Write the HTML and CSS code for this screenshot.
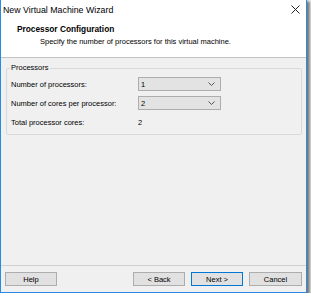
FILE: index.html
```html
<!DOCTYPE html>
<html>
<head>
<meta charset="utf-8">
<link rel="stylesheet" href="styles.css">
</head>
<body>
<div class="window">
  <div class="titlebar">
    <span class="title">New Virtual Machine Wizard</span>
    <svg class="close" width="9" height="9" viewBox="0 0 9 9"><path d="M0.5 0.5 L8.5 8.5 M8.5 0.5 L0.5 8.5" stroke="#222" stroke-width="1" fill="none"/></svg>
  </div>
  <div class="header">
    <div class="heading">Processor Configuration</div>
    <div class="subtitle">Specify the number of processors for this virtual machine.</div>
  </div>
  <div class="content">
    <fieldset class="group">
      <legend>Processors</legend>
      <div class="grid">
        <div class="label">Number of processors:</div>
        <div class="combo"><span>1</span><svg width="7" height="4" viewBox="0 0 7 4"><path d="M0.5 0.5 L3.5 3.5 L6.5 0.5" stroke="#555" fill="none"/></svg></div>
        <div class="label">Number of cores per processor:</div>
        <div class="combo"><span>2</span><svg width="7" height="4" viewBox="0 0 7 4"><path d="M0.5 0.5 L3.5 3.5 L6.5 0.5" stroke="#555" fill="none"/></svg></div>
        <div class="label">Total processor cores:</div>
        <div class="value">2</div>
      </div>
    </fieldset>
  </div>
  <div class="footer">
    <button class="btn">Help</button>
    <div class="spacer"></div>
    <button class="btn">&lt; Back</button>
    <button class="btn primary">Next &gt;</button>
    <button class="btn cancel">Cancel</button>
  </div>
</div>
</body>
</html>
```

FILE: styles.css
```css
html, body {
  margin: 0;
  padding: 0;
  background: #ffffff;
}
body {
  font-family: "Liberation Sans", Arial, sans-serif;
  font-size: 7.5px;
  color: #000;
}
.window {
  width: 305px;
  height: 292px;
  border-left: 1px solid #2a8ae2;
  border-right: 1px solid #2a8ae2;
  border-bottom: 1px solid #2a8ae2;
  background: #f0f0f0;
  display: flex;
  flex-direction: column;
  box-shadow: 2px 2px 3px 1px rgba(0,0,0,0.55);
}
.titlebar {
  height: 20px;
  background: #fff;
  display: flex;
  align-items: center;
  padding-left: 2px;
  padding-right: 6px;
}
.title {
  flex: 1;
  font-size: 8.8px;
}
.close {
  display: block;
  margin-top: -1px;
}
.header {
  background: #fff;
  padding: 4px 0 10px 16px;
  border-bottom: 1px solid #c3c3c3;
}
.heading {
  font-weight: bold;
  font-size: 8.3px;
  line-height: 10px;
}
.subtitle {
  line-height: 10px;
  margin-top: 3px;
  padding-left: 23px;
}
.content {
  flex: 1;
  padding: 5px 4px 0 5px;
}
.group {
  margin: 0;
  border: 1px solid #d9d9d9;
  border-radius: 2px;
  padding: 0 4px 5px 4px;
  min-width: 0;
}
.group legend {
  padding: 0 1px;
  line-height: 10px;
  margin-left: -1px;
}
.grid {
  display: grid;
  grid-template-columns: 127px 83px;
  grid-auto-rows: 14px;
  row-gap: 5px;
  align-items: center;
  margin-top: 4px;
}
.combo {
  height: 14px;
  box-sizing: border-box;
  border: 1px solid #adadad;
  background: #e3e3e3;
  display: flex;
  align-items: center;
  justify-content: space-between;
  padding: 0 5px 0 2px;
}
.combo svg { display: block; }
.footer {
  border-top: 1px solid #d0d0d0;
  padding: 6px 4px 6px 4px;
  display: flex;
  gap: 6px;
}
.spacer { flex: 1; }
.btn {
  width: 52px;
  height: 14px;
  box-sizing: border-box;
  border: 1px solid #adadad;
  background: #e1e1e1;
  font-family: "Liberation Sans", Arial, sans-serif;
  font-size: 7.5px;
  color: #000;
  padding: 0;
  margin: 0;
}
.btn.primary { border-color: #0078d7; }
.btn.cancel { width: 53px; }
```
